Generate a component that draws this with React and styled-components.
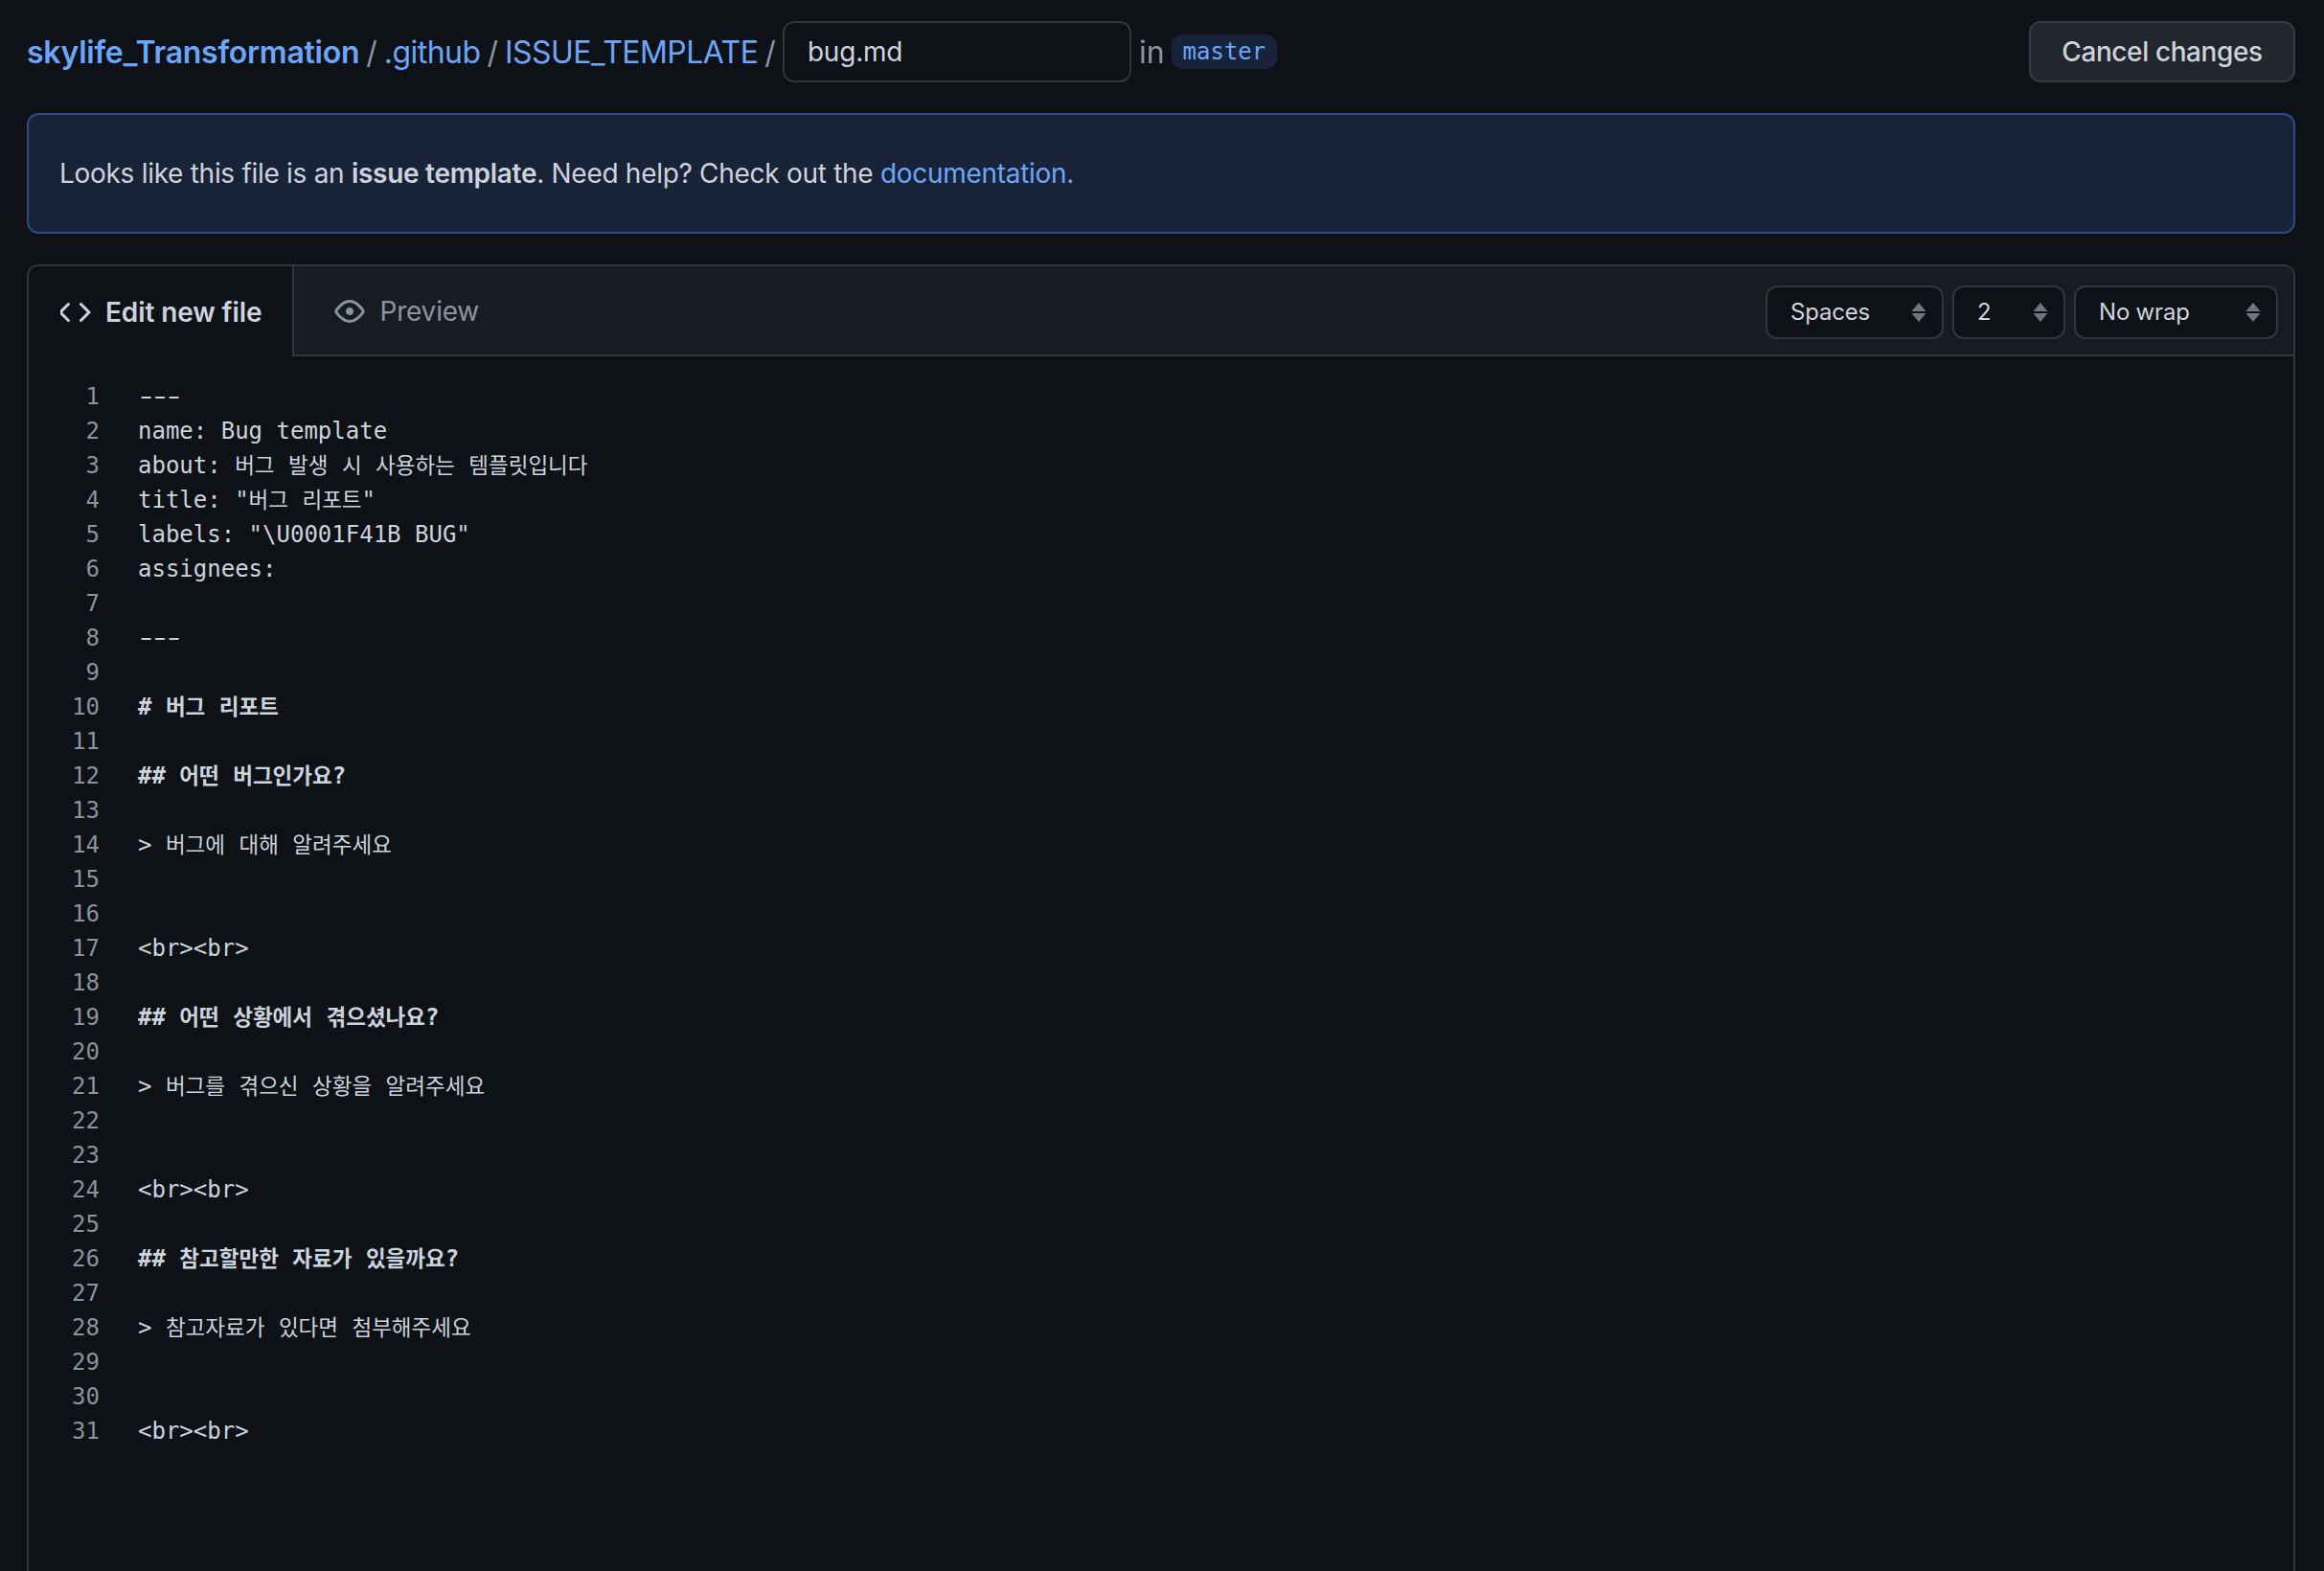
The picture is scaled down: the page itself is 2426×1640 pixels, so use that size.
import React from "react";
import styled, { createGlobalStyle } from "styled-components";

const GlobalStyle = createGlobalStyle`
  html, body {
    margin: 0;
    height: 100%;
    background: #0e1116;
    overflow: hidden;
  }
  * {
    box-sizing: border-box;
  }
`;

const Page = styled.div`
  width: 2426px;
  height: 1640px;
  padding: 22px 30px 0 28px;
  font-family: Inter, "Noto Sans", sans-serif;
  color: #cdd3dc;
  overflow: hidden;
`;

const TopBar = styled.div`
  display: flex;
  align-items: center;
  height: 64px;
`;

const Crumb = styled.a`
  color: #6ca6f8;
  font-size: 32px;
  font-weight: ${(props) => (props.$strong ? 600 : 400)};
  letter-spacing: ${(props) => (props.$strong ? "-0.25px" : "-0.55px")};
`;

const Slash = styled.span`
  color: #8b949e;
  font-size: 32px;
  margin: 0 7px;
`;

const FileInput = styled.div`
  width: 364px;
  height: 64px;
  display: flex;
  align-items: center;
  padding: 0 24px;
  background: #0e1116;
  border: 2px solid #30363d;
  border-radius: 12px;
  font-size: 28px;
  letter-spacing: -0.2px;
`;

const InText = styled.span`
  color: #8b949e;
  font-size: 32px;
  margin: 0 7px 0 8px;
`;

const BranchTag = styled.code`
  height: 36px;
  padding: 0 12px;
  display: flex;
  align-items: center;
  border-radius: 12px;
  background: #18233a;
  color: #6ca6f8;
  font-family: "DejaVu Sans Mono", monospace;
  font-size: 24px;
`;

const CancelButton = styled.button`
  margin-left: auto;
  width: 278px;
  height: 64px;
  background: #22262d;
  border: 2px solid #363b42;
  border-radius: 12px;
  color: #cdd3dc;
  font-family: inherit;
  font-size: 28px;
  font-weight: 500;
  letter-spacing: -0.4px;
`;

const Banner = styled.div`
  margin-top: 32px;
  height: 126px;
  display: flex;
  align-items: center;
  padding: 0 32px;
  background: #192338;
  border: 2px solid #2c4b83;
  border-radius: 12px;
  font-size: 28px;
  letter-spacing: -0.29px;

  a {
    color: #6ca6f8;
  }
  b {
    font-weight: 600;
  }
`;

const EditorBox = styled.div`
  margin-top: 32px;
  height: 1400px;
  border: 2px solid #30363d;
  border-bottom: none;
  border-radius: 12px 12px 0 0;
`;

const TabBar = styled.div`
  display: flex;
  align-items: stretch;
  height: 94px;
  background: #171b22;
  border-radius: 10px 10px 0 0;
`;

const Tab = styled.div`
  display: flex;
  align-items: center;
  gap: 15px;
  font-size: 28px;
  padding: ${(props) => (props.$active ? "1px 32px 0 33px" : "1px 0 0 42px")};
  font-weight: ${(props) => (props.$active ? 600 : 400)};
  letter-spacing: ${(props) => (props.$active ? "-0.1px" : "-0.2px")};
  color: ${(props) => (props.$active ? "#cdd3dc" : "#8b949e")};
  background: ${(props) => (props.$active ? "#0e1116" : "transparent")};
  border-right: ${(props) => (props.$active ? "2px solid #30363d" : "none")};
  border-radius: ${(props) => (props.$active ? "10px 0 0 0" : "0")};
  border-bottom: ${(props) => (props.$active ? "none" : "2px solid #30363d")};
`;

const TabFill = styled.div`
  flex: 1;
  display: flex;
  justify-content: flex-end;
  align-items: center;
  gap: 9px;
  padding: 3px 16px 0 0;
  border-bottom: 2px solid #30363d;
`;

const Select = styled.div`
  width: ${(props) => props.$width}px;
  height: 56px;
  display: flex;
  align-items: center;
  justify-content: space-between;
  padding: 0 16px 0 24px;
  background: #0e1116;
  border: 2px solid #30363d;
  border-radius: 12px;
  font-size: 24px;
  letter-spacing: -0.2px;
  color: #cdd3dc;
`;

const CodeArea = styled.div`
  padding-top: 24px;
  display: grid;
  grid-template-columns: 74px 1fr;
  column-gap: 40px;
  font-family: "DejaVu Sans Mono", "Noto Sans CJK KR", monospace;
  font-size: 24px;
  line-height: 36px;
`;

const LineNumbers = styled.div`
  text-align: right;
  color: #8b949e;
`;

const LineNumber = styled.div`
  height: 36px;
`;

const CodeLines = styled.div`
  color: #cdd3dc;
`;

const CodeLine = styled.div`
  height: 36px;
  white-space: pre;
  font-weight: ${(props) => (props.$bold ? 700 : 400)};
`;

const Hangul = styled.span`
  font-size: 22.5px;
`;

/* the reference's hyphens nearly touch, so stretch the whole run */
const Rule = styled.span`
  display: inline-block;
  margin-left: -3px;
  letter-spacing: -5.4px;
  transform: scaleX(1.6);
  transform-origin: left center;
`;

const CodeIcon = () => (
  <svg width="32" height="32" viewBox="0 0 16 16" fill="#cdd3dc">
    <path d="m11.28 3.22 4.25 4.25a.75.75 0 0 1 0 1.06l-4.25 4.25a.749.749 0 0 1-1.06-1.06L13.94 8l-3.72-3.72a.749.749 0 0 1 1.06-1.06Zm-6.56 0a.75.75 0 0 1 0 1.06L1 8l3.72 3.72a.749.749 0 0 1-1.06 1.06L-.59 8.53a.75.75 0 0 1 0-1.06l4.25-4.25a.75.75 0 0 1 1.06 0Z" />
  </svg>
);

const EyeIcon = () => (
  <svg width="32" height="32" viewBox="0 0 16 16" fill="#8b949e">
    <path d="M8 2c1.981 0 3.671.992 4.933 2.078 1.27 1.091 2.187 2.345 2.637 3.023a1.62 1.62 0 0 1 0 1.798c-.45.678-1.367 1.932-2.637 3.023C11.67 13.008 9.981 14 8 14s-3.671-.992-4.933-2.078C1.797 10.83.88 9.576.43 8.898a1.62 1.62 0 0 1 0-1.798c.45-.677 1.367-1.931 2.637-3.022C4.33 2.992 6.019 2 8 2ZM1.679 7.932a.12.12 0 0 0 0 .136c.411.622 1.241 1.75 2.366 2.717C5.176 11.758 6.527 12.5 8 12.5s2.825-.742 3.955-1.715c1.124-.967 1.954-2.096 2.366-2.717a.12.12 0 0 0 0-.136c-.412-.621-1.242-1.75-2.366-2.717C10.824 4.242 9.473 3.5 8 3.5s-2.825.742-3.955 1.715c-1.124.967-1.954 2.096-2.366 2.717ZM8 10a2 2 0 1 1-.001-3.999A2 2 0 0 1 8 10Z" />
  </svg>
);

const Arrows = () => (
  <svg width="16" height="20" viewBox="0 0 16 20" fill="#6e7681">
    <path d="M8 0l7.5 9H.5zM8 20l7.5-9H.5z" />
  </svg>
);

const lines = [
  ["---"],
  ["name: Bug template"],
  ["about: 버그 발생 시 사용하는 템플릿입니다"],
  ['title: "버그 리포트"'],
  ['labels: "\\U0001F41B BUG"'],
  ["assignees:"],
  [""],
  ["---"],
  [""],
  ["# 버그 리포트", true],
  [""],
  ["## 어떤 버그인가요?", true],
  [""],
  ["> 버그에 대해 알려주세요"],
  [""],
  [""],
  ["<br><br>"],
  [""],
  ["## 어떤 상황에서 겪으셨나요?", true],
  [""],
  ["> 버그를 겪으신 상황을 알려주세요"],
  [""],
  [""],
  ["<br><br>"],
  [""],
  ["## 참고할만한 자료가 있을까요?", true],
  [""],
  ["> 참고자료가 있다면 첨부해주세요"],
  [""],
  [""],
  ["<br><br>"],
];

// the original mono font draws hangul a bit narrower and hyphens longer
function renderCode(text) {
  if (text === "---") {
    return <Rule>{text}</Rule>;
  }
  return text.split(/([\uac00-\ud7a3]+)/).map((part, i) =>
    i % 2 ? <Hangul key={i}>{part}</Hangul> : part
  );
}

export default function App() {
  return (
    <Page>
      <GlobalStyle />
      <TopBar>
        <Crumb $strong>skylife_Transformation</Crumb>
        <Slash>/</Slash>
        <Crumb>.github</Crumb>
        <Slash>/</Slash>
        <Crumb>ISSUE_TEMPLATE</Crumb>
        <Slash>/</Slash>
        <FileInput>bug.md</FileInput>
        <InText>in</InText>
        <BranchTag>master</BranchTag>
        <CancelButton>Cancel changes</CancelButton>
      </TopBar>
      <Banner>
        <span>
          Looks like this file is an <b>issue template</b>. Need help? Check out the <a>documentation.</a>
        </span>
      </Banner>
      <EditorBox>
        <TabBar>
          <Tab $active>
            <CodeIcon />
            Edit new file
          </Tab>
          <Tab>
            <EyeIcon />
            Preview
          </Tab>
          <TabFill>
            <Select $width={186}>
              Spaces
              <Arrows />
            </Select>
            <Select $width={118}>
              2
              <Arrows />
            </Select>
            <Select $width={213}>
              No wrap
              <Arrows />
            </Select>
          </TabFill>
        </TabBar>
        <CodeArea>
          <LineNumbers>
            {lines.map((_, i) => (
              <LineNumber key={i}>{i + 1}</LineNumber>
            ))}
          </LineNumbers>
          <CodeLines>
            {lines.map(([text, bold], i) => (
              <CodeLine key={i} $bold={bold}>
                {renderCode(text)}
              </CodeLine>
            ))}
          </CodeLines>
        </CodeArea>
      </EditorBox>
    </Page>
  );
}
